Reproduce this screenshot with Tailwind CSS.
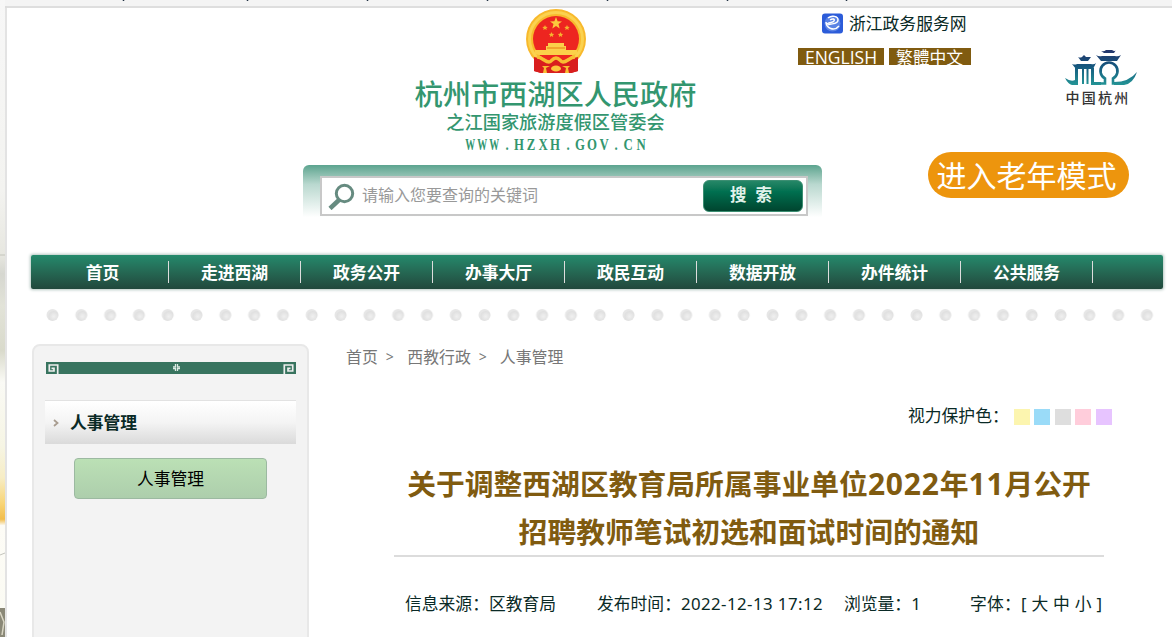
<!DOCTYPE html>
<html lang="zh-CN">
<head>
<meta charset="utf-8">
<title>关于调整西湖区教育局所属事业单位2022年11月公开招聘教师笔试初选和面试时间的通知</title>
<script src="https://cdn.jsdelivr.net/npm/@tailwindcss/browser@4"></script>
</head>
<body class="h-[637px] w-[1172px] overflow-hidden bg-white font-['Noto_Sans','Noto_Sans_CJK_SC',sans-serif] text-[16.8px] text-[#0a2a26]">
<div class="flex h-[637px]">
  <!-- page edge -->
  <svg class="h-[637px] w-[7px] shrink-0" viewBox="0 0 7 637">
    <defs>
      <linearGradient id="edge" x2="0" y2="1">
        <stop offset="0" stop-color="#f7f7f7"/><stop offset=".3" stop-color="#f3f3f0"/><stop offset=".4" stop-color="#e7e7e0"/><stop offset=".43" stop-color="#d6d7d0"/><stop offset=".48" stop-color="#e2e3d8"/><stop offset=".55" stop-color="#d9dacb"/><stop offset=".6" stop-color="#fafaf5"/><stop offset=".7" stop-color="#f6f5e4"/><stop offset=".75" stop-color="#f7edc5"/><stop offset=".79" stop-color="#f8d577"/><stop offset=".815" stop-color="#f2bd4b"/><stop offset=".825" stop-color="#fdfcf6"/><stop offset="1" stop-color="#fafaf2"/>
      </linearGradient>
    </defs>
    <path fill="url(#edge)" d="M0 0h5v637H0z"/>
    <path stroke="#c3c4bc" d="M0 255h5M0 555l5-2"/>
    <path fill="#8a8877" d="M0 608h5v29H0z"/>
    <path stroke="#d9d6c4" stroke-width="1.5" fill="none" d="M0 612l4 10-2 13"/>
    <path fill="#e3e3e3" d="M5 7h2v630H5z"/>
    <path fill="#f4f4f4" d="M5 0h2v6H5z"/><path fill="#dcdcdc" d="M5 6h2v2H5z"/>
  </svg>

  <div class="flex w-[1165px] flex-col">
    <div class="h-2 shrink-0 border-b-2 border-[#dedede] bg-[#f4f4f4]">
      <svg class="block h-[2px] w-full" viewBox="0 0 1165 2"><path stroke="#234" stroke-width="1.5" d="M116.500 0v1M240.500 0v1M360.500 0v1M480.500 0v1M600.500 0v1M720.500 0v1M839.500 0v1"/></svg>
    </div>

    <!-- header, upper row -->
    <div class="flex h-36 shrink-0">
      <div class="ml-[389px] flex w-[319px] flex-col items-center text-[#33966f]">
        <svg class="mt-px h-[65px] w-[62px] shrink-0" viewBox="0 0 62 65">
          <path fill="#c9151b" d="M9 44h44v18l-7 2H16l-7-2z"/>
          <circle cx="31" cy="30" r="30" fill="#f8b92c"/>
          <circle cx="31" cy="30" r="26.500" fill="none" stroke="#fbd24f" stroke-width="3"/>
          <circle cx="31" cy="30" r="23" fill="#ed2520"/>
          <path fill="#fbc83d" d="M31 8l1.600 4.200 4.400.2-3.500 2.700 1.200 4.300L31 17l-3.700 2.400 1.200-4.300L25 12.400l4.400-.2z"/>
          <g fill="#f6b32f"><path id="s" d="M20 16l.8 1.700 1.900.2-1.400 1.300.4 1.900-1.700-1-1.700 1 .4-1.900-1.400-1.300 1.900-.2z"/><use href="#s" x="22"/><use href="#s" x="6.500" y="7"/><use href="#s" x="15.500" y="7"/></g>
          <path fill="#fbd04a" d="M23 34h16v3h2v4h11v4l-4 1H14l-4-1v-4h11v-4h2z"/>
          <path fill="#f1a72d" d="M22 38h18v2H22z"/>
          <path fill="#d91e1e" d="M9 48c6 1 9 4 14 4 3 0 4-4 8-4s5 4 8 4c5 0 8-3 14-4v14l-7 2H16l-7-2z"/>
          <path fill="none" stroke="#f8bd32" stroke-width="3.500" d="M12 48c5 0 8 5 12 5 3 0 3-4 7-4s4 4 7 4c4 0 7-5 12-5"/>
          <ellipse cx="31" cy="59.500" rx="5" ry="3" fill="#fbc63d"/>
          <path fill="#f8bd32" d="M17 57h8l-4 2 1 5h-4l1-5zM37 57h8l-2 2 1 5h-4l1-5z"/>
        </svg>
        <div class="mt-[3px] h-[37px] whitespace-nowrap text-[28.200px] font-medium leading-[34px]">杭州市西湖区人民政府</div>
        <div class="h-[22px] whitespace-nowrap text-[18.200px] font-medium leading-[17px]">之江国家旅游度假区管委会</div>
        <div class="flex h-4 w-[183px] font-['Liberation_Serif',serif] text-[16px] font-bold leading-[18px] *:flex *:w-[12.2px] *:justify-center *:scale-x-80"><span class="scale-x-[.62]!">W</span><span class="scale-x-[.62]!">W</span><span class="scale-x-[.62]!">W</span><span>.</span><span>H</span><span>Z</span><span>X</span><span>H</span><span>.</span><span>G</span><span>O</span><span>V</span><span>.</span><span>C</span><span>N</span></div>
      </div>
      <div class="ml-[83px] w-[180px] pt-[5px]">
        <div class="ml-[24px] flex h-5 items-center gap-[6px] whitespace-nowrap leading-5">
          <svg class="size-[21px]" viewBox="0 0 21 21"><rect width="21" height="20" y=".5" rx="3" fill="#2c5cd9"/><circle cx="10.500" cy="10.500" r="8" fill="#5b83e4"/><path fill="none" stroke="#fff" stroke-width="1.500" d="M6 5c4-3 10-2 10 2 0 5-7 3-10 5M4 9c0 6 8 10 13 4M8 7c3-2 5-1 4 1s-5 1-7 3"/></svg>
          <span class="pt-[2px]">浙江政务服务网</span>
        </div>
        <div class="mt-[15px] flex h-[17px] gap-[5px] whitespace-nowrap text-white">
          <span class="w-[86px] bg-[#805b10] text-center font-['Open_Sans'] text-[17.500px] leading-[18px]">ENGLISH</span>
          <span class="w-[82px] bg-[#805b10] pr-px text-center font-['Noto_Sans_CJK_TC'] leading-[18px]">繁體中文</span>
        </div>
      </div>
      <div class="ml-[85px] mt-[41px] flex w-[76px] flex-col items-center">
        <svg class="h-[38px] w-[74px]" viewBox="0 0 74 38">
          <defs><linearGradient id="hz" x2="0" y1="0" y2="38" gradientUnits="userSpaceOnUse"><stop stop-color="#253269"/><stop offset=".45" stop-color="#15577e"/><stop offset="1" stop-color="#259b98"/></linearGradient></defs>
          <g fill="url(#hz)"><path d="M37 2q3 1 5-1h6q3 2 4 0l-2 3H40zM32 6q3 2 6 1h13q3 1 6-1l-4 6H37zM14 8q2 1 4 0l2-2 2 2h5l-3 4H17zM8 15q3 1 5 0h14q3 1 5-1l-3 6H12z"/>
          <path d="M1 29q6 4 10 2V19h3v17H8Q4 35 1 29M18 19h2v16h-2M22.500 19h2v16h-2M27 19h3v14h7v3H27M50 33q15 0 23-10-4 12-13 13H50z"/></g>
          <path fill="none" stroke="url(#hz)" stroke-width="2.600" d="M34 34.500h7v-5a8.500 8.500 0 1 1 8 0v5h5"/>
        </svg>
        <div class="mr-[6px] whitespace-nowrap text-[14px] font-medium leading-[22px] tracking-[2.200px] text-[#333]">中国杭州</div>
      </div>
    </div>

    <!-- header, search row -->
    <div class="flex h-[103px] shrink-0">
      <div class="ml-[296px] mt-[13px] h-[55px] w-[519px] rounded-t-md bg-linear-to-b from-[#5ba48f] via-[#b9d8cf] via-35% to-white to-95% px-[17px] pt-[11px]">
        <div class="flex h-[40px] w-[488px] items-center border-2 border-[#c8c8c8] bg-white">
          <svg class="ml-[6px] size-[27px]" viewBox="0 0 27 27"><circle cx="16.500" cy="10.500" r="8.200" fill="none" stroke="#668b80" stroke-width="3"/><path stroke="#668b80" stroke-width="4.500" d="M11 17l-9 8.500"/></svg>
          <span class="mb-[3px] ml-[7px] w-[341px] whitespace-nowrap text-[16px] text-[#999]">请输入您要查询的关键词</span>
          <button class="flex h-8 w-[100px] items-center justify-center rounded-md border border-[#3c8e72] bg-linear-to-b from-[#258767] via-[#007050] via-35% to-[#00452f] pr-1 pb-px text-[16.500px] font-bold text-[#e2f2eb]"><span class="mr-[9px]">搜</span><span>索</span></button>
        </div>
      </div>
      <div class="ml-[106px] h-[46px] w-[201px] rounded-full bg-[#ed950d] pr-1 text-center text-[30px] leading-[48px] whitespace-nowrap text-white">进入老年模式</div>
    </div>

    <!-- navigation -->
    <nav class="ml-6 flex h-[34px] w-[1132px] shrink-0 items-center rounded-xs bg-linear-to-b from-[#248a6c] to-[#21483c] font-bold text-white shadow-[0_0_3px_1px_#b4c6c0] *:h-[22px] *:w-[132px] *:border-r *:border-[#ddd] *:text-center *:leading-[24px] *:whitespace-nowrap">
      <a class="ml-[6px]">首页</a><a>走进西湖</a><a>政务公开</a><a>办事大厅</a><a>政民互动</a><a>数据开放</a><a>办件统计</a><a>公共服务</a>
    </nav>
    <svg class="mt-5 ml-[38px] h-[13px] w-[1120px] shrink-0">
      <defs><radialGradient id="dot" cx=".6" cy=".62"><stop offset="0" stop-color="#f0f0f0"/><stop offset=".5" stop-color="#e6e6e6"/><stop offset=".8" stop-color="#e0e0e0"/><stop offset="1" stop-color="#e6e6e6"/></radialGradient>
      <pattern id="dots" width="28.800" height="13" patternUnits="userSpaceOnUse"><circle cx="7.500" cy="6" r="6" fill="url(#dot)"/></pattern></defs>
      <rect width="1120" height="13" fill="url(#dots)"/>
    </svg>

    <div class="flex h-[315px] shrink-0">
      <!-- sidebar -->
      <aside class="mt-[22px] ml-[25px] h-[310px] w-[277px] rounded-t-lg border-2 border-[#e8e8e8] bg-[#f3f3f3] px-[11px]">
        <svg class="mt-[16px] ml-px block h-3 w-[250px]" viewBox="0 0 250 12"><path fill="#38745f" d="M0 0h250v12H0z"/><g fill="none" stroke="#eee" stroke-width="1.700"><path id="key" d="M11.700 12V3H3.300v6H8V6.300H5.500"/><use href="#key" transform="matrix(-1 0 0 1 250 0)"/></g><path fill="none" stroke="#dceae4" stroke-width="1.300" d="M129.500 2v2.800H127M131.500 2v2.800h2.500M129.500 9V6.500H127M131.500 9V6.500h2.500"/></svg>
        <div class="mt-[26px] flex h-[44px] w-[251px] items-center border-t border-[#e2e2e2] bg-linear-to-b from-white via-[#f4f4f4] via-50% to-[#dadada] font-bold">
          <svg class="ml-2 h-2 w-[6px]" viewBox="0 0 6 8"><path fill="none" stroke="#a99d90" stroke-width="1.800" d="M1 1l3.500 3L1 7"/></svg>
          <span class="ml-[11px] pt-px">人事管理</span>
        </div>
        <div class="mt-[14px] ml-[29px] h-[41px] w-[193px] rounded-sm border border-[#9cb9a1] bg-linear-to-b from-[#bbe0b5] to-[#adceac] text-center leading-[40px] text-black">人事管理</div>
      </aside>

      <!-- article -->
      <main class="ml-[37px] w-[800px]">
        <div class="mt-[25px] flex h-5 items-center whitespace-nowrap text-[15.900px] leading-5 text-[#777]"><span>首页</span><span class="ml-[8px] w-[21.500px] text-[14px]">&gt;</span><span>西教行政</span><span class="ml-[8px] w-[21px] text-[14px]">&gt;</span><span>人事管理</span></div>
        <div class="mt-[39px] ml-[562px] flex h-5 items-center whitespace-nowrap leading-5">
          <span class="w-[106px]">视力保护色：</span>
          <div class="flex gap-[4.7px] pt-px *:h-4 *:w-[15.8px]"><i class="bg-[#fcf5af]"></i><i class="bg-[#9adbf8]"></i><i class="bg-[#dedede]"></i><i class="bg-[#ffcddb]"></i><i class="bg-[#e7c4ff]"></i></div>
        </div>
        <h1 class="mt-[34px] ml-[48px] h-[95px] w-[710px] text-center text-[28.800px] leading-[48px] font-bold whitespace-nowrap text-[#805b10]">关于调整西湖区教育局所属事业单位<span class="text-[30px] leading-none tracking-[.8px]">2022</span>年<span class="text-[30px] leading-none tracking-[.8px]">11</span>月公开<br>招聘教师笔试初选和面试时间的通知</h1>
        <hr class="ml-[48px] w-[710px] border-t-2 border-[#dcdcdc]">
        <div class="mt-[37px] ml-[59px] flex h-5 whitespace-nowrap leading-5"><span class="w-[192px]">信息来源：区教育局</span><span class="w-[247px]">发布时间：<span class="tracking-[.45px]">2022-12-13 17:12</span></span><span class="w-[126px]">浏览量：1</span><span class="tracking-[.25px]">字体：[ 大 中 小 ]</span></div>
      </main>
    </div>
  </div>
</div>
</body>
</html>
